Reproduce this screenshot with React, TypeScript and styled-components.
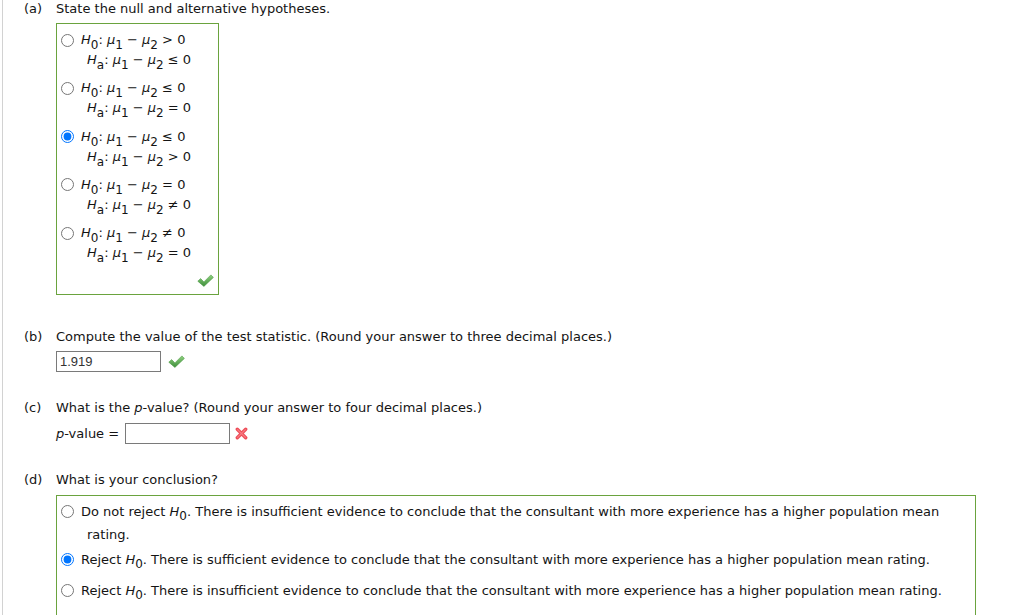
import React from "react";
import styled, { createGlobalStyle } from "styled-components";

const GlobalStyle = createGlobalStyle`
  html, body { margin: 0; padding: 0; background: #fff; overflow: hidden; }
  body {
    font-family: "DejaVu Sans", Verdana, sans-serif;
    font-size: 13px;
    color: #141414;
  }
`;

const Page = styled.div`
  margin-left: 2px;
  border-left: 1px solid #d2d2d2;
  padding-left: 21px;
  min-height: 615px;
`;

const Part = styled.section<{ $top: number }>`
  display: grid;
  grid-template-columns: 32px 1fr;
  margin-top: ${(p) => p.$top}px;
`;

const PartLabel = styled.div`
  line-height: 16px;
  padding-top: 1px;
`;

const PartBody = styled.div`
  display: flex;
  flex-direction: column;
  align-items: flex-start;
`;

const Prompt = styled.div`
  line-height: 16px;
  padding-top: 1px;
  white-space: nowrap;
`;

const ChoiceBox = styled.div<{ $width: number; $padTop: number; $gap: number }>`
  margin-top: ${(p) => p.$gap}px;
  width: ${(p) => p.$width}px;
  box-sizing: border-box;
  border: 1px solid #6aa33e;
  padding: ${(p) => p.$padTop}px 4px 0 4px;
`;

const Radio = styled.input.attrs({ type: "radio" })<{ $offset: number }>`
  flex: none;
  width: 13px;
  height: 13px;
  margin: ${(p) => p.$offset}px 0 0 0;
`;

const HypOption = styled.label`
  display: flex;
  align-items: flex-start;
  & + & {
    margin-top: 8.25px;
  }
`;

const HypText = styled.div`
  margin-left: 13px;
  text-indent: -6px;
  line-height: 20px;
  white-space: nowrap;
`;

const I = styled.i`
  font-style: italic;
`;

const Sub = styled.span<{ $drop?: boolean }>`
  font-size: 12px;
  ${(p) =>
    p.$drop
      ? `vertical-align: -4px; line-height: 20px;`
      : `position: relative; top: 5px; line-height: 1;`}
`;

const MarkRow = styled.div`
  display: flex;
  justify-content: flex-end;
  padding: 11px 0 7px;
`;

const AnswerRow = styled.div<{ $gap: number }>`
  display: flex;
  align-items: center;
  margin-top: ${(p) => p.$gap}px;
  white-space: nowrap;
`;

const AnswerInput = styled.input`
  width: 105px;
  height: 21px;
  box-sizing: border-box;
  margin: 0;
  border: 1px solid #7a7a7a;
  border-radius: 0;
  padding: 0 3px;
  font-family: "Liberation Sans", Arial, sans-serif;
  font-size: 13px;
  color: #333;
  background: #fff;
  outline: none;
`;

const FieldLabel = styled.span`
  margin-right: 6px;
`;

const IconSlot = styled.span<{ $gap: number }>`
  display: inline-flex;
  margin-left: ${(p) => p.$gap}px;
`;

const ConclusionOption = styled.label`
  display: flex;
  align-items: flex-start;
  line-height: 17px;
  & + & {
    margin-top: 8px;
  }
`;

const ConclusionText = styled.div`
  margin-left: 13px;
  margin-right: 4px;
  text-indent: -6px;
`;

const CheckIcon = () => (
  <svg width="17" height="13" viewBox="0 0 17 13">
    <defs>
      <linearGradient id="chk" x1="0" y1="0" x2="0" y2="1">
        <stop offset="0" stopColor="#8fd17f" />
        <stop offset="1" stopColor="#3f8f3c" />
      </linearGradient>
    </defs>
    <path
      d="M0.8 7.2 L3.6 4.6 L6.9 7.9 L13.9 0.9 L16.4 3.4 L6.9 12.4 Z"
      fill="url(#chk)"
      stroke="#4e9a45"
      strokeWidth="0.6"
      strokeLinejoin="round"
    />
  </svg>
);

const CrossIcon = () => (
  <svg width="13" height="13" viewBox="0 0 13 13">
    <path
      d="M2.3 2.3 L10.7 10.7 M10.7 2.3 L2.3 10.7"
      stroke="#ee4d58"
      strokeWidth="3.4"
      strokeLinecap="round"
    />
    <path
      d="M2.6 2.6 L10.4 10.4 M10.4 2.6 L2.6 10.4"
      stroke="#f77b83"
      strokeWidth="1.2"
      strokeLinecap="round"
    />
  </svg>
);

const Minus = "\u2212";

const hypotheses: { h0: string; ha: string }[] = [
  { h0: ">", ha: "\u2264" },
  { h0: "\u2264", ha: "=" },
  { h0: "\u2264", ha: ">" },
  { h0: "=", ha: "\u2260" },
  { h0: "\u2260", ha: "=" },
];

const Hyp = ({ label, rel }: { label: string; rel: string }) => (
  <>
    <I>H</I>
    <Sub>{label}</Sub>: <I>μ</I>
    <Sub>1</Sub> {Minus} <I>μ</I>
    <Sub>2</Sub> {rel} 0
  </>
);

const conclusions: { lead: string; rest: string; checked?: boolean }[] = [
  {
    lead: "Do not reject ",
    rest: ". There is insufficient evidence to conclude that the consultant with more experience has a higher population mean rating.",
  },
  {
    lead: "Reject ",
    rest: ". There is sufficient evidence to conclude that the consultant with more experience has a higher population mean rating.",
    checked: true,
  },
  {
    lead: "Reject ",
    rest: ". There is insufficient evidence to conclude that the consultant with more experience has a higher population mean rating.",
  },
  {
    lead: "Do not reject ",
    rest: ". There is sufficient evidence to conclude that the consultant with more experience has a higher population mean rating.",
  },
];

export default function App() {
  return (
    <>
      <GlobalStyle />
      <Page>
        <Part $top={0}>
          <PartLabel>(a)</PartLabel>
          <PartBody>
            <Prompt>State the null and alternative hypotheses.</Prompt>
            <ChoiceBox $width={163} $padTop={6} $gap={6}>
              {hypotheses.map((h, i) => (
                <HypOption key={i}>
                  <Radio name="hyp" $offset={3.5} defaultChecked={i === 2} />
                  <HypText>
                    <Hyp label="0" rel={h.h0} />
                    <br />
                    <Hyp label="a" rel={h.ha} />
                  </HypText>
                </HypOption>
              ))}
              <MarkRow>
                <CheckIcon />
              </MarkRow>
            </ChoiceBox>
          </PartBody>
        </Part>

        <Part $top={33}>
          <PartLabel>(b)</PartLabel>
          <PartBody>
            <Prompt>
              Compute the value of the test statistic. (Round your answer to three decimal places.)
            </Prompt>
            <AnswerRow $gap={6}>
              <AnswerInput defaultValue="1.919" />
              <IconSlot $gap={7}>
                <CheckIcon />
              </IconSlot>
            </AnswerRow>
          </PartBody>
        </Part>

        <Part $top={27}>
          <PartLabel>(c)</PartLabel>
          <PartBody>
            <Prompt>
              What is the <I>p</I>-value? (Round your answer to four decimal places.)
            </Prompt>
            <AnswerRow $gap={7}>
              <FieldLabel>
                <I>p</I>-value =
              </FieldLabel>
              <AnswerInput defaultValue="" />
              <IconSlot $gap={5}>
                <CrossIcon />
              </IconSlot>
            </AnswerRow>
          </PartBody>
        </Part>

        <Part $top={27}>
          <PartLabel>(d)</PartLabel>
          <PartBody>
            <Prompt>What is your conclusion?</Prompt>
            <ChoiceBox $width={920} $padTop={6.5} $gap={7}>
              {conclusions.map((c, i) => (
                <ConclusionOption key={i}>
                  <Radio name="concl" $offset={2} defaultChecked={!!c.checked} />
                  <ConclusionText>
                    {c.lead}
                    <I>H</I>
                    <Sub $drop>0</Sub>
                    {c.rest}
                  </ConclusionText>
                </ConclusionOption>
              ))}
            </ChoiceBox>
          </PartBody>
        </Part>
      </Page>
    </>
  );
}
